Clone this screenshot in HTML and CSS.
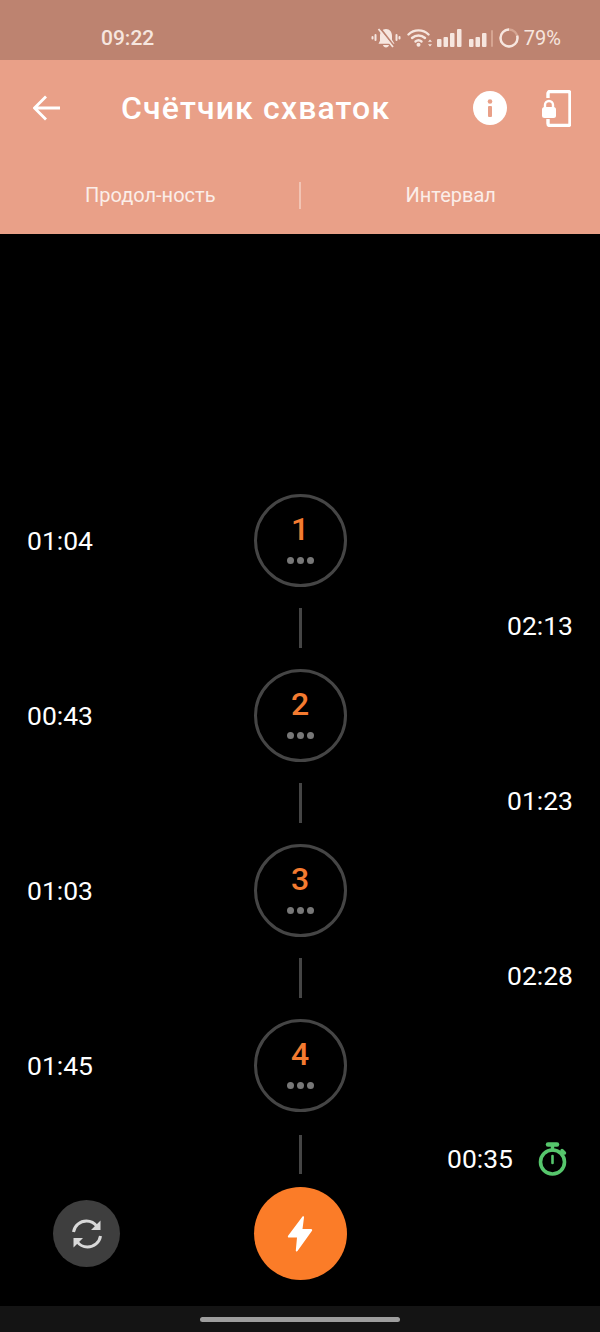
FILE: index.html
```html
<!DOCTYPE html>
<html lang="ru">
<head>
    <meta charset="UTF-8">
    <meta name="viewport" content="width=device-width, initial-scale=1.0">
    <title>Счётчик схваток</title>
    <link rel="stylesheet" href="styles.css">
</head>
<body>
    <div class="status-bar">
        <span class="status-time">09:22</span>
        <div class="status-icons">
            <svg class="ic-bell" width="30" height="20" viewBox="0 0 30 20">
                <path d="M15 1c3.800 0 6 3 6 6.800v4l2.500 4H7.500l1.500-3V7.800C9 4 11.200 1 15 1z" fill="#f6e6df"/>
                <path d="M12 17h6c-.3 1.500-1.500 2.500-3 2.500s-2.700-1-3-2.500z" fill="#f6e6df"/>
                <path d="M9 0L23 18" stroke="#bd8370" stroke-width="2"/>
                <path d="M7.500 1L22 19" stroke="#f6e6df" stroke-width="1.800"/>
                <path d="M4.500 7v5M25.500 7v5M1.500 9v1.500M28.500 9v1.500" stroke="#f6e6df" stroke-width="2" stroke-linecap="round"/>
            </svg>
            <svg class="ic-wifi" width="26" height="19" viewBox="0 0 26 19">
                <g fill="none" stroke="#f6e6df" stroke-width="2.400" stroke-linecap="round">
                    <path d="M1.500 6.500C7 1 16 1 21.500 6.500"/>
                    <path d="M5 10c3.800-3.400 9.200-3.400 13 0"/>
                    <path d="M8.500 13.500c2-1.600 4-1.600 6 0"/>
                </g>
                <circle cx="11.500" cy="16.800" r="2" fill="#f6e6df"/>
                <path d="M23 11.500l2 2.200h-4zM23 18.500l-2-2.200h4z" fill="#f6e6df"/>
            </svg>
            <svg class="ic-signal" width="25" height="18" viewBox="0 0 25 18">
                <rect x="0" y="10" width="4.500" height="8" rx="1" fill="#f6e6df"/>
                <rect x="6.500" y="8" width="4.500" height="10" rx="1" fill="#f6e6df"/>
                <rect x="13" y="4" width="4.500" height="14" rx="1" fill="#f6e6df"/>
                <rect x="20" y="0" width="4.500" height="18" rx="1" fill="#f6e6df"/>
            </svg>
            <svg class="ic-signal-2" width="25" height="18" viewBox="0 0 25 18">
                <rect x="0" y="10" width="4.500" height="8" rx="1" fill="#f6e6df"/>
                <rect x="6.500" y="8" width="4.500" height="10" rx="1" fill="#f6e6df"/>
                <rect x="13" y="4" width="4.500" height="14" rx="1" fill="#f6e6df"/>
                <rect x="22" y="1" width="2" height="17" rx="1" fill="#d6a592"/>
            </svg>
            <svg class="ic-battery" width="20" height="20" viewBox="0 0 20 20">
                <circle cx="10" cy="10" r="8.500" fill="none" stroke="#d6a592" stroke-width="2.400"/>
                <circle cx="10" cy="10" r="8.500" fill="none" stroke="#f6e6df" stroke-width="2.400" stroke-dasharray="42.200 53.400" transform="rotate(-90 10 10) scale(1 -1) translate(0 -20)"/>
            </svg>
            <span class="status-pct">79%</span>
        </div>
    </div>

    <header class="app-header">
        <div class="toolbar">
            <svg class="back-icon" width="28" height="26" viewBox="0 0 28 26">
                <path d="M27 13H2M13 1.500L1.500 13 13 24.500" fill="none" stroke="#fff" stroke-width="2.800"/>
            </svg>
            <h1 class="title">Счётчик схваток</h1>
            <svg class="info-icon" width="34" height="34" viewBox="0 0 34 34">
                <circle cx="17" cy="17" r="17" fill="#fff"/>
                <rect x="15" y="15" width="4" height="11" rx="1" fill="#e9a088"/>
                <circle cx="17" cy="10.500" r="2.300" fill="#e9a088"/>
            </svg>
            <svg class="lock-icon" width="30" height="37" viewBox="0 0 30 37">
                <path d="M7 8V3.500A2 2 0 0 1 9 1.500h18a2 2 0 0 1 2 2v30a2 2 0 0 1-2 2H9a2 2 0 0 1-2-2V29" fill="none" stroke="#fff" stroke-width="3.400"/>
                <rect x="1" y="17" width="14" height="11" rx="2.500" fill="#fff"/>
                <path d="M4 18v-3a4 4 0 0 1 8 0v3" fill="none" stroke="#fff" stroke-width="2.400"/>
            </svg>
        </div>
        <div class="tabs">
            <span class="tab">Продол-ность</span>
            <span class="tab-divider"></span>
            <span class="tab">Интервал</span>
        </div>
    </header>

    <main class="timeline">
        <div class="row">
            <span class="time time-left">01:04</span>
            <div class="circle"><span class="num">1</span><span class="dots"><i></i><i></i><i></i></span></div>
            <span class="connector"></span>
            <span class="time time-right">02:13</span>
        </div>
        <div class="row">
            <span class="time time-left">00:43</span>
            <div class="circle"><span class="num">2</span><span class="dots"><i></i><i></i><i></i></span></div>
            <span class="connector"></span>
            <span class="time time-right">01:23</span>
        </div>
        <div class="row">
            <span class="time time-left">01:03</span>
            <div class="circle"><span class="num">3</span><span class="dots"><i></i><i></i><i></i></span></div>
            <span class="connector"></span>
            <span class="time time-right">02:28</span>
        </div>
        <div class="row row-last">
            <span class="time time-left">01:45</span>
            <div class="circle"><span class="num">4</span><span class="dots"><i></i><i></i><i></i></span></div>
            <span class="connector"></span>
            <div class="time-right running">
                <span class="time">00:35</span>
                <svg width="30" height="34" viewBox="0 0 30 34">
                    <path d="M10 2.500h9" stroke="#56c66c" stroke-width="4.500" stroke-linecap="round"/>
                    <path d="M14.500 3v5M24 8.500l2.500 2.500" stroke="#56c66c" stroke-width="3.400" stroke-linecap="round"/>
                    <circle cx="14.500" cy="20" r="12" fill="none" stroke="#56c66c" stroke-width="3.600"/>
                    <path d="M14.500 14v7" stroke="#56c66c" stroke-width="2.600" stroke-linecap="round"/>
                </svg>
            </div>
        </div>
    </main>

    <div class="actions">
        <button class="reset-btn" type="button">
            <svg width="32" height="32" viewBox="0 0 32 32">
                <g fill="none" stroke="#d9d9d9" stroke-width="3">
                    <path d="M2.500 14C3.500 7.500 9 3 15.500 3c4.500 0 8 2 10.500 5.500"/>
                    <path d="M29.500 18c-1 6.500-6.500 11-13 11-4.500 0-8-2-10.500-5.500"/>
                </g>
                <path d="M29.500 2.500v9.500h-9.500zM2.500 29.500V20h9.500z" fill="#d9d9d9"/>
            </svg>
        </button>
        <button class="start-btn" type="button">
            <svg width="26" height="38" viewBox="0 0 26 38">
                <path d="M15.500 1.500c.8-.6 1.700 0 1.500 1L15.500 14h8.500c1 0 1.500 1 1 1.800L10.500 36c-.6.800-1.800.4-1.700-.6L10 22.500H2c-1 0-1.500-1-.9-1.800z" fill="#fff"/>
            </svg>
        </button>
    </div>

    <div class="nav-bar"><span class="nav-pill"></span></div>
</body>
</html>
```

FILE: styles.css
```css
* {
    box-sizing: border-box;
}

html, body {
    height: 100%;
}

body {
    margin: 0;
    display: flex;
    flex-direction: column;
    background: #000;
    color: #fff;
    font-family: Roboto, "Liberation Sans", sans-serif;
}

.status-bar {
    height: 60px;
    flex: none;
    display: flex;
    align-items: center;
    justify-content: space-between;
    padding: 15px 39px 0 101px;
    background: #bd8370;
    color: #f6e6df;
    font-size: 20px;
}

.status-time {
    font-size: 21px;
    font-weight: 500;
}

.status-icons {
    display: flex;
    align-items: center;
}

.ic-bell {
    margin-right: 6px;
}

.ic-wifi {
    margin-right: 4px;
}

.ic-signal {
    margin-right: 7px;
}

.ic-signal-2 {
    margin-right: 5px;
}

.status-pct {
    margin-left: 5px;
}

.app-header {
    flex: none;
    background: #e9a088;
}

.toolbar {
    height: 96px;
    display: flex;
    align-items: center;
    padding: 0 29px 0 33px;
}

.title {
    flex: 1;
    margin: 0 0 0 60px;
    font-size: 32px;
    font-weight: 500;
    letter-spacing: 1.15px;
}

.info-icon {
    margin-right: 34px;
}

.tabs {
    height: 78px;
    display: flex;
    align-items: center;
    padding-left: 1px;
}

.tab {
    flex: 1;
    text-align: center;
    font-size: 20px;
    color: #fbeee9;
}

.tab-divider {
    width: 2px;
    height: 27px;
    margin: 0 1px 0 -1px;
    background: #f2c4b4;
}

.timeline {
    flex: 1;
    padding-top: 260px;
}

.row {
    display: grid;
    grid-template-columns: 1fr 93px 1fr;
    grid-template-rows: 93px 82px;
    align-items: center;
}

.row-last {
    grid-template-rows: 93px 75px;
}

.time {
    font-size: 26.5px;
    color: #fff;
}

.time-left {
    padding-left: 27px;
}

.time-right {
    grid-row: 2;
    grid-column: 3;
    justify-self: end;
    padding-right: 27px;
    margin-bottom: 6px;
}

.circle {
    grid-row: 1;
    grid-column: 2;
    width: 93px;
    height: 93px;
    border: 3px solid #454545;
    border-radius: 50%;
    display: flex;
    flex-direction: column;
    align-items: center;
    padding-top: 13px;
}

.num {
    font-size: 32px;
    line-height: 38px;
    font-weight: 500;
    color: #f47b30;
}

.dots {
    display: flex;
    gap: 3px;
    margin-top: 9px;
}

.dots i {
    width: 7px;
    height: 7px;
    border-radius: 50%;
    background: #777;
}

.connector {
    grid-row: 2;
    grid-column: 2;
    justify-self: center;
    width: 3px;
    height: 40px;
    background: #454545;
}

.row-last .connector {
    align-self: start;
    height: 39px;
    margin-top: 23px;
}

.running {
    display: flex;
    align-items: center;
    gap: 25px;
    padding-right: 32px;
    margin-bottom: 0;
    margin-top: 18px;
}

.actions {
    display: grid;
    grid-template-columns: 1fr 93px 1fr;
    align-items: center;
    height: 93px;
    flex: none;
    margin-bottom: 26px;
}

.actions button {
    border: 0;
    padding: 0;
    border-radius: 50%;
    display: flex;
    align-items: center;
    justify-content: center;
}

.reset-btn {
    grid-column: 1;
    justify-self: start;
    width: 67px;
    height: 67px;
    margin-left: 53px;
    background: #3e3e3e;
}

.start-btn {
    grid-column: 2;
    width: 93px;
    height: 93px;
    background: #fb7c28;
}

.nav-bar {
    flex: none;
    height: 26px;
    background: #141414;
    display: flex;
    justify-content: center;
    padding-top: 11px;
}

.nav-pill {
    width: 200px;
    height: 5px;
    border-radius: 3px;
    background: #9e9e9e;
}
```
